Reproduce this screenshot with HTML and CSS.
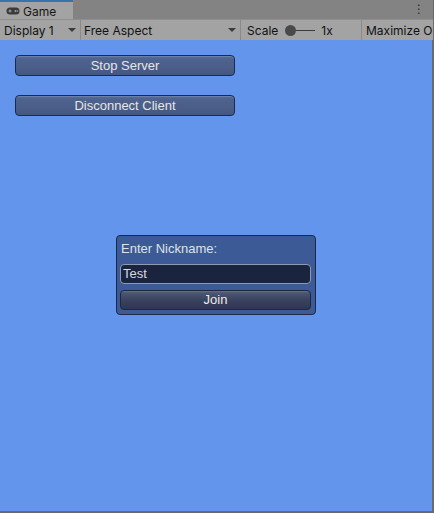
FILE: index.html
```html
<!DOCTYPE html>
<html>
<head>
<meta charset="utf-8">
<link rel="stylesheet" href="styles.css">
</head>
<body>
<div class="window">
  <div class="tabstrip">
    <div class="tab">
      <svg class="pad" width="14" height="8" viewBox="0 0 14 8">
        <rect x="0.5" y="0.5" width="13" height="7" rx="3.5" fill="#3a3a3a"/>
        <rect x="2.5" y="3.5" width="3" height="1" fill="#a3a3a3"/>
        <rect x="3.5" y="2.5" width="1" height="3" fill="#a3a3a3"/>
        <circle cx="9.5" cy="4" r="1" fill="#a3a3a3"/>
        <circle cx="11.5" cy="4" r="0.8" fill="#a3a3a3"/>
      </svg>
      <span>Game</span>
    </div>
    <div class="kebab">⋮</div>
  </div>
  <div class="toolbar">
    <div class="tool display"><span>Display 1</span><i class="arrow"></i></div>
    <div class="tool aspect"><span>Free Aspect</span><i class="arrow"></i></div>
    <div class="tool scale"><span>Scale</span><span class="slider"><b class="knob"></b></span><span class="val">1x</span></div>
    <div class="tool max"><span>Maximize O</span></div>
  </div>
  <div class="game">
    <div class="buttons">
      <div class="btn">Stop Server</div>
      <div class="btn">Disconnect Client</div>
    </div>
    <div class="panel">
      <div class="label">Enter Nickname:</div>
      <div class="field">Test</div>
      <div class="join">Join</div>
    </div>
  </div>
</div>
</body>
</html>
```

FILE: styles.css
```css
html, body {
  margin: 0;
  padding: 0;
}
body {
  width: 434px;
  height: 513px;
  overflow: hidden;
  background: #6a6a6a;
}
.window {
  width: 433px;
  height: 511px;
  display: flex;
  flex-direction: column;
  overflow: hidden;
}
.tabstrip {
  height: 19px;
  background: #838383;
  display: flex;
  align-items: stretch;
  justify-content: space-between;
  flex: none;
}
.tab {
  width: 73px;
  background: #a3a3a3;
  border-top: 2px solid #3a72b0;
  box-sizing: border-box;
  display: flex;
  align-items: center;
  gap: 3px;
  padding-left: 6px;
  font-family: Inter, "Liberation Sans", sans-serif;
  font-size: 12px;
  color: #161616;
}
.tab span {
  margin-top: 1px;
}
.kebab {
  font-family: "DejaVu Sans", sans-serif;
  font-size: 12px;
  color: #2a2a2a;
  width: 12px;
  margin-right: 8px;
  line-height: 19px;
  text-align: center;
}
.toolbar {
  height: 21px;
  background: #a3a3a3;
  border-top: 1px solid #8e8e8e;
  box-sizing: border-box;
  display: flex;
  flex: none;
  font-family: Inter, "Liberation Sans", sans-serif;
  font-size: 12px;
  color: #111;
  white-space: nowrap;
  overflow: hidden;
}
.tool {
  display: flex;
  align-items: center;
  border-right: 1px solid #8a8a8a;
  box-sizing: border-box;
  flex: none;
}
.display {
  width: 81px;
  padding-left: 4px;
  justify-content: space-between;
  padding-right: 4px;
}
.aspect {
  width: 160px;
  padding-left: 3px;
  justify-content: space-between;
  padding-right: 4px;
}
.arrow {
  width: 0;
  height: 0;
  border-left: 4px solid transparent;
  border-right: 4px solid transparent;
  border-top: 4px solid #3c3c3c;
}
.scale {
  width: 121px;
  padding-left: 6px;
}
.slider {
  position: relative;
  width: 25px;
  height: 1px;
  background: #3c3c3c;
  margin-left: 12px;
  margin-right: 6px;
}
.knob {
  position: absolute;
  left: -5px;
  top: -5px;
  width: 11px;
  height: 11px;
  border-radius: 50%;
  background: #4a4a4a;
}
.max {
  border-right: none;
  padding-left: 4px;
  flex: 1;
  min-width: 0;
}
.game {
  flex: 1;
  background: #6495ed;
  display: grid;
  grid-template-areas: "main";
  border-right: 1px solid #6a6a6a;
}
.buttons {
  grid-area: main;
  align-self: start;
  justify-self: start;
  padding: 15px 0 0 15px;
  display: flex;
  flex-direction: column;
  gap: 19px;
}
.btn {
  width: 220px;
  height: 21px;
  box-sizing: border-box;
  border: 1px solid #1e2a47;
  border-radius: 4px;
  background: linear-gradient(#5b6f99 0, #4d628d 3px, #4a5e89 60%, #44577f 100%);
  box-shadow: inset 0 1px 0 #6a7ea6;
  color: #e6e6e6;
  font-family: "Liberation Sans", Arial, sans-serif;
  font-size: 13px;
  line-height: 19px;
  text-align: center;
}
.panel {
  grid-area: main;
  align-self: center;
  justify-self: center;
  margin-bottom: 2px;
  width: 200px;
  height: 80px;
  box-sizing: border-box;
  background: #3c5a95;
  border: 1px solid #1c2a48;
  border-radius: 4px;
  padding: 5px 4px 0 3px;
  font-family: "Liberation Sans", Arial, sans-serif;
  font-size: 13px;
  color: #dfe2e8;
}
.label {
  height: 23px;
  line-height: 16px;
  padding-left: 1px;
}
.field {
  height: 20px;
  box-sizing: border-box;
  background: #1b243f;
  border: 1px solid #8f9ab2;
  border-radius: 4px;
  padding-left: 2px;
  line-height: 18px;
  color: #d6d9e0;
}
.join {
  margin-top: 6px;
  height: 20px;
  box-sizing: border-box;
  border: 1px solid #1e2641;
  border-radius: 4px;
  background: linear-gradient(#6a7289 0, #4b5470 2px, #39425e 50%, #2e3652 100%);
  line-height: 18px;
  text-align: center;
  color: #ececec;
}
```
